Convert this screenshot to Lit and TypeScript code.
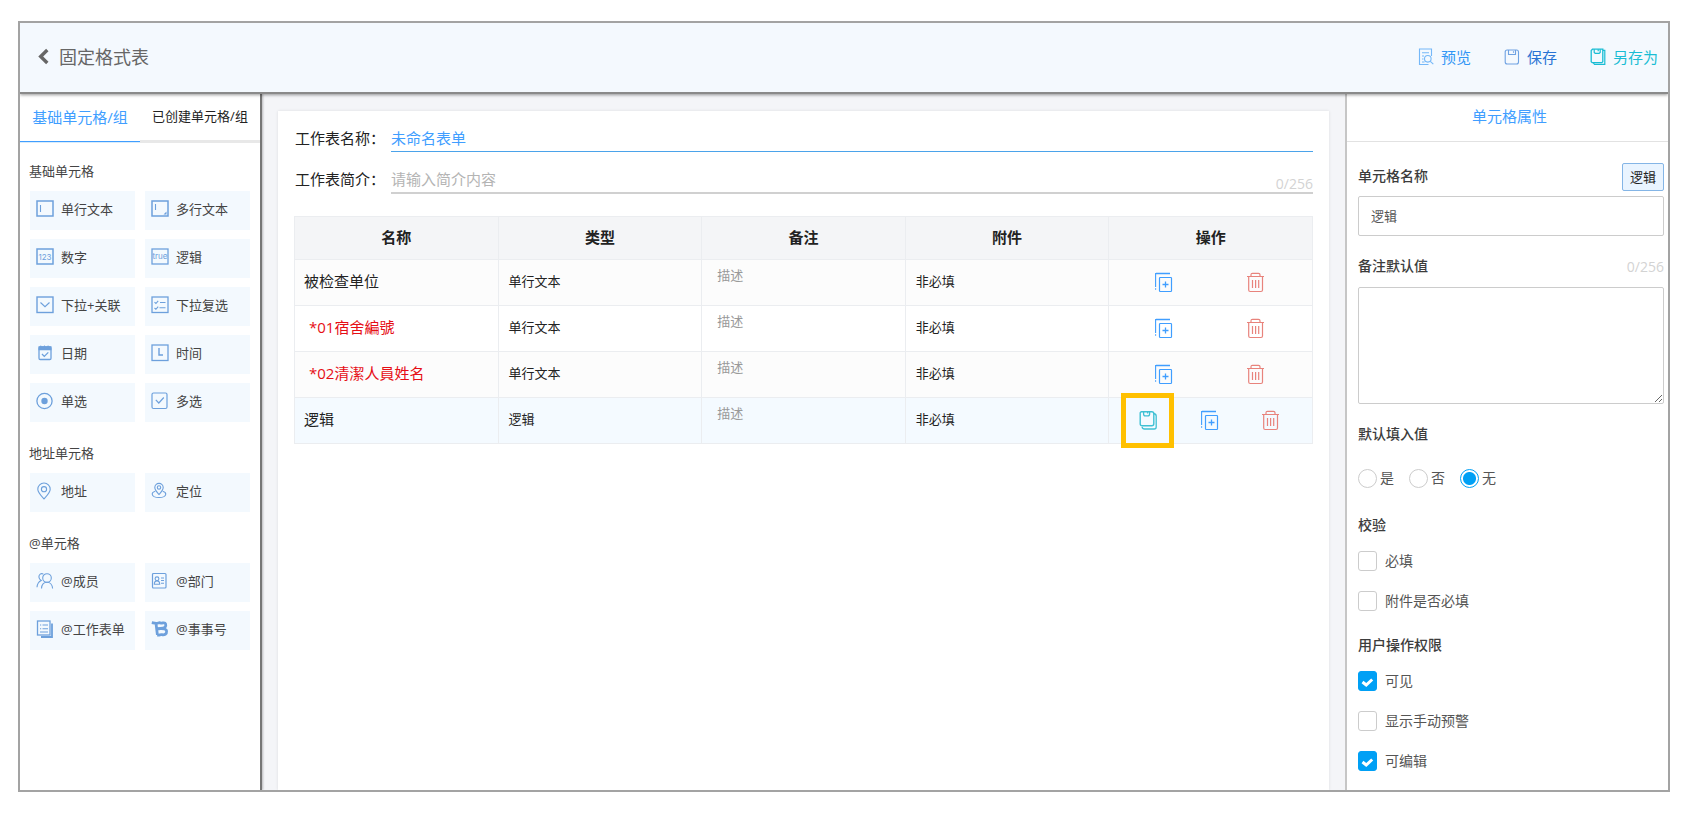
import { LitElement, html, svg, css, nothing } from "lit";
import { customElement, property, state } from "lit/decorators.js";
import { classMap } from "lit/directives/class-map.js";

const icons: Record<string, unknown> = {
  text: svg`<rect x="1" y="1" width="16" height="15" stroke-width="1.5"/><path d="M4.5 5v7"/>`,
  textarea: svg`<rect x="1" y="1" width="16" height="15" stroke-width="1.5"/><path d="M4.5 4v6"/><path d="M15.5 11.5v3h-3z" class="solid"/>`,
  number: svg`<rect x="1" y="1" width="16" height="15" stroke-width="1.5"/><text x="9" y="11.5" font-size="8" text-anchor="middle">123</text>`,
  logic: svg`<rect x="1" y="1" width="16" height="15" stroke-width="1.3"/><text x="9" y="11.3" font-size="8" text-anchor="middle">true</text>`,
  select: svg`<rect x="1" y="1" width="16" height="15.5" stroke-width="1.4"/><path d="M4.5 6.5 9 10.7l4.5-4.2"/>`,
  multi: svg`<rect x="1" y="1" width="16" height="15.5" stroke-width="1.3"/><path d="m3.5 6.2 1.4 1.3 2.3-2.7M3.5 12l1.4 1.3 2.3-2.7M9 6.5h5.5M8.5 11.8h6"/>`,
  date: svg`<rect x="3" y="3" width="12" height="12.5" rx="1.2" stroke-width="1.3"/><path class="solid" d="M2.5 2.2h1.700l.6-.9.8.9h2l.8-.9.8.9h2l.9-.9.7.9h2.700v4h-13z"/><path d="m6 10 2.300 2.400 4-4" stroke-width="1.300"/>`,
  time: svg`<rect x="1" y="1" width="16" height="15.5" stroke-width="1.3"/><path d="M8 4v7h4" stroke-width="1.4"/>`,
  radio: svg`<circle cx="8.5" cy="9" r="7.6" stroke-width="1.3"/><circle class="solid" cx="8.5" cy="9" r="3.2"/>`,
  check: svg`<rect x="1" y="1" width="15" height="15.5" rx="1.5" stroke-width="1.2"/><path d="m4.8 7.8 3 3.2 5-5.5" stroke-width="1.2"/>`,
  pin: svg`<path d="M8 16.8C5.5 14 1.8 10.6 1.8 7.2a6.2 6.2 0 0 1 12.4 0C14.2 10.6 10.5 14 8 16.8z"/><circle cx="8" cy="7.2" r="2.6"/>`,
  locate: svg`<path d="M8 12.5C6 10.3 3.8 8.2 3.8 5.6a4.200 4.200 0 0 1 8.400 0C12.200 8.200 10 10.300 8 12.500z"/><circle cx="8" cy="5.500" r="1.700"/><path d="M4.300 9.300C2.200 9.900 1 11 1.300 12.500c.3 1.800 3.200 3 6.700 3s6.400-1.200 6.700-3c.3-1.500-.9-2.600-3-3.200"/>`,
  members: svg`<circle cx="11" cy="6" r="4.300"/><path d="M5.500 16.500c.2-3.500 2.300-6.200 5.500-6.200s5.400 2.700 5.600 6.200M7.300 2C5 .9 2.800 2.500 2.900 5c.1 1.600.9 2.800 2.300 3.500C2.800 9.500 1.300 12 1 15.300"/>`,
  dept: svg`<rect x="1.500" y="1.500" width="13.500" height="14.500" rx="1" stroke-width="1.200"/><circle cx="6" cy="6.800" r="1.900"/><path d="M3.300 12.300c0-2.200 1-3.400 2.700-3.400s2.700 1.200 2.700 3.400zM10 6h3M10 8.500h3M10 11.300h3"/>`,
  sheet: svg`<rect x="1.500" y="1" width="12.500" height="14" stroke-width="1.300"/><path d="M5 17h11V3.500" stroke-width="1.800"/><path d="M4 5h1.200M6.500 5h5.500M4 8.800h1.200M6.500 8.800h5.500M4 12h8"/>`,
  brand: svg`<path d="M.8 2.600 5 3.400l1.400 11.500M5 3.400c2.200.2 3-1.300 4.600-.4 1.700.8 4.200-1.500 5 1 .7 2.300-.8 4-2.800 4.200-2 .2-3.400.1-5.800.4 3.200.6 9.200-1.200 9.600 2.600.3 3-2.300 4-4.600 3.500-1.900-.4-2.700 1-4.600.2" stroke-width="2.800" stroke-linejoin="round"/>`,
  preview: svg`<path d="M13.500 8V1H1.500v15.500h9"/><path d="M4 4.800h7M4 8h2M4 11h1.500M4 14h2.500"/><circle cx="9.800" cy="10.800" r="3.300"/><path d="m12.300 13.300 3 2.800"/>`,
  save: svg`<rect x="1.200" y="2" width="13.300" height="14" rx="2"/><path d="M4.500 2v4.500h7V2M9.500 3.300v1.500"/>`,
  saveAs: svg`<path d="M1.200 2.500v11.300l1 .9h9.600l1-.9V1.200H2.500z" stroke-width="1.300"/><path d="M4.200 1.200v3.300l1 .8h4l1-.8V1.200M8.200 1.200v2M12.800 2.300h2v14H4.500l-1.300-1.600" stroke-width="1.200"/>`,
  saveCell: svg`<path d="M3.200 1.700h10.600c1.300 0 2 .8 2 2v10c0 1.300-.8 2-2 2H4.200c-1.300 0-2-.7-2-2v-11z" stroke-width="1.400"/><path d="M5.600 1.700v2.200c0 1.300.7 1.900 1.800 1.900h2.400c1.200 0 1.800-.6 1.800-1.900V1.700M9.600 2v1.500" stroke-width="1.300"/><path d="M15.600 3.500c1.600.3 2.600 1 2.600 2.500v11c0 1.300-.7 2-2 2H6.500c-1.300 0-2.200-.9-2.400-2.200" stroke-width="1.300"/>`,
  copy: svg`<path d="M16 1.500H2" stroke-width="1.500"/><path d="M1.600 1v14M1.600 16.200v1.500" stroke-width="1.100"/><rect x="5.500" y="5.500" width="12" height="14" rx=".8" stroke-width="1.200"/><path d="M8.500 12.500h6M11.500 9.500v6" stroke-width="1.300"/>`,
  trash: svg`<path d="M1 4.500h17M5 4.300V2.800c0-1 .5-1.500 1.500-1.500h6c1 0 1.500.5 1.500 1.500v1.500M2.700 5v13c0 1 .5 1.500 1.500 1.500h10.800c1 0 1.500-.5 1.500-1.500V5M6.500 8v8M9.600 8v8M12.700 8v8" stroke-width="1.200"/>`,
  back: svg`<path d="M9.300 2 2.700 8.500l6.600 6.500" stroke-width="3.400"/>`,
};

@customElement("ui-icon")
class UiIcon extends LitElement {
  @property() name = "";
  @property({ type: Number }) w = 18;
  @property({ type: Number }) h = 18;

  static styles = css`
    :host { display: block; flex: none; }
    svg { display: block; fill: none; stroke: currentColor; stroke-width: 1.1; }
    .solid { fill: currentColor; stroke: none; }
    text { fill: currentColor; stroke: none; font-family: Inter, "Open Sans", sans-serif; }
  `;

  render() {
    return html`<svg width=${this.w} height=${this.h} viewBox="0 0 ${this.w} ${this.h}" aria-hidden="true">${icons[this.name]}</svg>`;
  }
}

const groups = [
  {
    title: "基础单元格",
    items: [
      ["text", "单行文本"], ["textarea", "多行文本"],
      ["number", "数字"], ["logic", "逻辑"],
      ["select", "下拉+关联"], ["multi", "下拉复选"],
      ["date", "日期"], ["time", "时间"],
      ["radio", "单选"], ["check", "多选"],
    ],
  },
  { title: "地址单元格", items: [["pin", "地址"], ["locate", "定位"]] },
  {
    title: "@单元格",
    items: [
      ["members", "@成员"], ["dept", "@部门"],
      ["sheet", "@工作表单"], ["brand", "@事事号"],
    ],
  },
];

const rows = [
  { name: "被检查单位", type: "单行文本" },
  { name: "*01宿舍編號", type: "单行文本", required: true },
  { name: "*02清潔人員姓名", type: "单行文本", required: true },
  { name: "逻辑", type: "逻辑", selected: true },
];

@customElement("app-root")
class AppRoot extends LitElement {
  @state() private tab = 0;
  @state() private fill = "无";

  static styles = css`
    :host {
      display: block;
      box-sizing: border-box;
      height: 100vh;
      padding: 21px 35px 24px 18px;
      background: #fff;
      color: #222;
      font-family: "Open Sans", "Noto Sans CJK SC", sans-serif;
      font-size: 13px;
      line-height: 20px;
    }
    * { box-sizing: border-box; }
    button, input, textarea { font: inherit; color: inherit; margin: 0; }
    button { border: 0; padding: 0; background: none; cursor: pointer; }
    .frame {
      display: flex;
      flex-direction: column;
      height: 100%;
      border: 2px solid #a3a3a3;
      overflow: hidden;
    }
    .bar {
      display: flex;
      align-items: center;
      justify-content: space-between;
      flex: none;
      height: 71px;
      padding: 0 10px 2px 18px;
      background: #f4f9fe;
      border-bottom: 2px solid #8a8a8a;
      box-shadow: 0 1px 3px rgba(0, 0, 0, 0.4);
      z-index: 1;
    }
    .back {
      display: flex;
      align-items: center;
      gap: 9px;
      font-size: 18px;
      color: #666;
    }
    .actions { display: flex; gap: 33px; }
    .actions button {
      display: flex;
      align-items: center;
      gap: 7px;
      font-size: 15px;
    }
    .preview { color: #3296f5; }
    .save { color: #2874d4; }
    .save-as { color: #19bdd4; }
    .preview ui-icon, .save ui-icon { opacity: 0.65; }
    .body { display: flex; flex: 1; min-height: 0; }
    .side {
      flex: none;
      width: 242px;
      border-right: 2px solid #767676;
      box-shadow: 1px 0 2px rgba(0, 0, 0, 0.25);
      z-index: 0;
    }
    .tabs {
      display: grid;
      grid-template-columns: 1fr 1fr;
      height: 49px;
    }
    .tabs button {
      white-space: nowrap;
      padding-bottom: 2px;
      border-bottom: 3px solid #e8e8e8;
      font-size: 13px;
    }
    .tabs .on {
      border-bottom: 1px solid #409eff;
      box-shadow: 0 1px 0 #d9ecfb;
      margin-bottom: 1px;
      font-size: 15px;
      color: #409eff;
    }
    .group { padding: 0 10px 3px; color: #444; }
    .group h2 {
      margin: 0 0 0 -1px;
      padding: 18px 0 10px;
      font-size: 13px;
      font-weight: 400;
      line-height: 20px;
    }
    .tiles {
      display: grid;
      grid-template-columns: 105px 105px;
      justify-content: space-between;
      gap: 9px;
    }
    .tile {
      display: flex;
      align-items: center;
      gap: 7px;
      height: 39px;
      padding: 0 0 3px 6px;
      background: #f3f9fe;
      white-space: nowrap;
    }
    .tile ui-icon { color: #6da0dc; }
    .center {
      display: flex;
      flex: 1;
      min-width: 0;
      padding: 17px 16px 0;
      background: #f4f5f8;
    }
    .sheet {
      flex: 1;
      min-width: 0;
      padding: 13px 16px 0;
      background: #fff;
      box-shadow: 0 0 3px rgba(0, 0, 0, 0.1);
    }
    .line {
      display: flex;
      margin-bottom: 12px;
      font-size: 15px;
      line-height: 27px;
    }
    .line label { flex: none; width: 97px; padding: 1px 0 1px 1px; }
    .line .box {
      display: flex;
      flex: 1;
      height: 29px;
      border-bottom: 2px solid #d0d0d0;
    }
    .line .box.active { border-bottom: 1px solid #4ba3ea; color: #409eff; height: 28px; }
    .line input {
      flex: 1;
      min-width: 0;
      padding: 2px 0 0;
      border: 0;
      outline: 0;
      background: none;
    }
    ::placeholder { color: #b4b4b4; opacity: 1; }
    .count { color: #d3d3d3; font-size: 14px; }
    .line .count { padding-top: 5px; }
    table {
      width: 100%;
      margin-top: 22px;
      border-collapse: collapse;
      table-layout: fixed;
    }
    th, td { border: 1px solid #ebedf0; }
    th {
      height: 43px;
      padding: 0 0 2px;
      background: #f4f5f7;
      font-size: 15px;
      font-weight: 700;
    }
    td { height: 46px; padding: 0 10px 3px; }
    tbody tr:nth-child(odd) { background: #fcfcfc; }
    tbody tr.selected { background: #f4faff; }
    .name { font-size: 15px; padding-left: 9px; }
    .name.required { color: #e60e15; padding-left: 14px; }
    .note { padding: 5px 15px 0; vertical-align: top; }
    .note input {
      display: block;
      width: 100%;
      height: 20px;
      padding: 0;
      border: 0;
      outline: 0;
      background: none;
    }
    .note ::placeholder { color: #999; }
    .tools { padding: 0 11px 0 8px; }
    .ops { display: flex; }
    .ops button { flex: 1; display: flex; justify-content: center; position: relative; }
    .copy { color: #409eff; }
    .trash { color: #e8837c; }
    .save-cell { color: #3fc0d4; }
    .mark {
      position: absolute;
      inset: -17px 0;
      margin: auto;
      width: 53px;
      height: 55px;
      border: 5px solid #ffc000;
      pointer-events: none;
    }
    .props {
      flex: none;
      width: 323px;
      border-left: 2px solid #c6c6c6;
      color: #555;
      font-size: 14px;
    }
    .props h1 {
      height: 48px;
      margin: 0;
      padding-left: 4px;
      border-bottom: 1px solid #e2e2e2;
      color: #409eff;
      font-size: 15px;
      font-weight: 400;
      line-height: 45px;
      text-align: center;
    }
    .form { padding: 21px 4px 0 11px; }
    .row { display: flex; align-items: center; justify-content: space-between; }
    .title { font-weight: 500; color: #3c3c3c; line-height: 18px; padding-bottom: 2px; }
    .chip {
      height: 28px;
      padding: 0 7px;
      border: 1px solid #84b5e6;
      border-radius: 2px;
      background: #e9f4ff;
      color: #222;
      font-size: 13px;
    }
    .field {
      display: block;
      width: 100%;
      border: 1px solid #ccc;
      border-radius: 2px;
      background: #fff;
      outline: 0;
      font-size: 13px;
    }
    input.field { height: 40px; margin: 5px 0 21px; padding: 0 12px 2px; }
    textarea.field { height: 117px; margin: 10px 0 21px; padding: 8px 12px; }
    .radios { display: flex; gap: 15px; margin: 23px 0 28px; }
    .radios label { display: flex; align-items: center; gap: 3px; }
    input[type="radio"], input[type="checkbox"] {
      appearance: none;
      flex: none;
      width: 19px;
      height: 20px;
      border: 1px solid #ccc;
      background: #fff;
    }
    input[type="radio"] { height: 19px; border-radius: 50%; }
    input[type="radio"]:checked {
      border-color: #00a0f5;
      background: radial-gradient(circle, #00a0f5 6px, #fff 7px);
    }
    input[type="checkbox"] { border-radius: 3px; }
    input[type="checkbox"]:checked {
      border-color: #00a0f5;
      background: #00a0f5 url('data:image/svg+xml,<svg xmlns="http://www.w3.org/2000/svg" width="19" height="20"><path d="m4.500 11 3.700 3 6-5.500" fill="none" stroke="white" stroke-width="3"/></svg>') center;
    }
    .checks { display: flex; flex-direction: column; gap: 20px; margin: 15px 0 25px; }
    .checks label { display: flex; align-items: center; gap: 8px; }
  `;

  private check(label: string, on = false) {
    return html`<label><input type="checkbox" .checked=${on} />${label}</label>`;
  }

  render() {
    return html`
      <div class="frame">
        <header class="bar">
          <button class="back"><ui-icon name="back" w="12" h="17"></ui-icon>固定格式表</button>
          <div class="actions">
            <button class="preview"><ui-icon name="preview" w="16" h="18"></ui-icon>预览</button>
            <button class="save"><ui-icon name="save" w="16" h="18"></ui-icon>保存</button>
            <button class="save-as"><ui-icon name="saveAs" w="16" h="18"></ui-icon>另存为</button>
          </div>
        </header>
        <div class="body">
          <nav class="side">
            <div class="tabs">
              ${["基础单元格/组", "已创建单元格/组"].map(
                (t, i) => html`<button class=${classMap({ on: this.tab === i })} @click=${() => (this.tab = i)}>${t}</button>`
              )}
            </div>
            ${groups.map(
              (g) => html`<section class="group">
                <h2>${g.title}</h2>
                <div class="tiles">
                  ${g.items.map(([icon, label]) => html`<button class="tile"><ui-icon name=${icon}></ui-icon>${label}</button>`)}
                </div>
              </section>`
            )}
          </nav>
          <main class="center">
            <div class="sheet">
              <div class="line">
                <label for="title">工作表名称：</label>
                <div class="box active"><input id="title" value="未命名表单" /></div>
              </div>
              <div class="line">
                <label for="intro">工作表简介：</label>
                <div class="box"><input id="intro" placeholder="请输入简介内容" /><span class="count">0/256</span></div>
              </div>
              <table>
                <thead>
                  <tr>${["名称", "类型", "备注", "附件", "操作"].map((h) => html`<th>${h}</th>`)}</tr>
                </thead>
                <tbody>
                  ${rows.map(
                    (r) => html`<tr class=${classMap({ selected: !!r.selected })}>
                      <td class=${classMap({ name: true, required: !!r.required })}>${r.name}</td>
                      <td>${r.type}</td>
                      <td class="note"><input placeholder="描述" aria-label="描述" /></td>
                      <td>非必填</td>
                      <td class="tools">
                        <div class="ops">
                          ${r.selected
                            ? html`<button class="save-cell" aria-label="另存为"><ui-icon name="saveCell" w="20" h="21"></ui-icon><span class="mark"></span></button>`
                            : nothing}
                          <button class="copy" aria-label="复制"><ui-icon name="copy" w="19" h="21"></ui-icon></button>
                          <button class="trash" aria-label="删除"><ui-icon name="trash" w="19" h="21"></ui-icon></button>
                        </div>
                      </td>
                    </tr>`
                  )}
                </tbody>
              </table>
            </div>
          </main>
          <aside class="props">
            <h1>单元格属性</h1>
            <div class="form">
              <div class="row"><label class="title" for="cell">单元格名称</label><button class="chip">逻辑</button></div>
              <input class="field" id="cell" value="逻辑" />
              <div class="row"><label class="title" for="remark">备注默认值</label><span class="count">0/256</span></div>
              <textarea class="field" id="remark"></textarea>
              <div class="title">默认填入值</div>
              <div class="radios">
                ${["是", "否", "无"].map(
                  (v) => html`<label><input type="radio" name="fill" .checked=${this.fill === v} @change=${() => (this.fill = v)} />${v}</label>`
                )}
              </div>
              <div class="title">校验</div>
              <div class="checks">${this.check("必填")}${this.check("附件是否必填")}</div>
              <div class="title">用户操作权限</div>
              <div class="checks">${this.check("可见", true)}${this.check("显示手动预警")}${this.check("可编辑", true)}</div>
            </div>
          </aside>
        </div>
      </div>
    `;
  }
}
